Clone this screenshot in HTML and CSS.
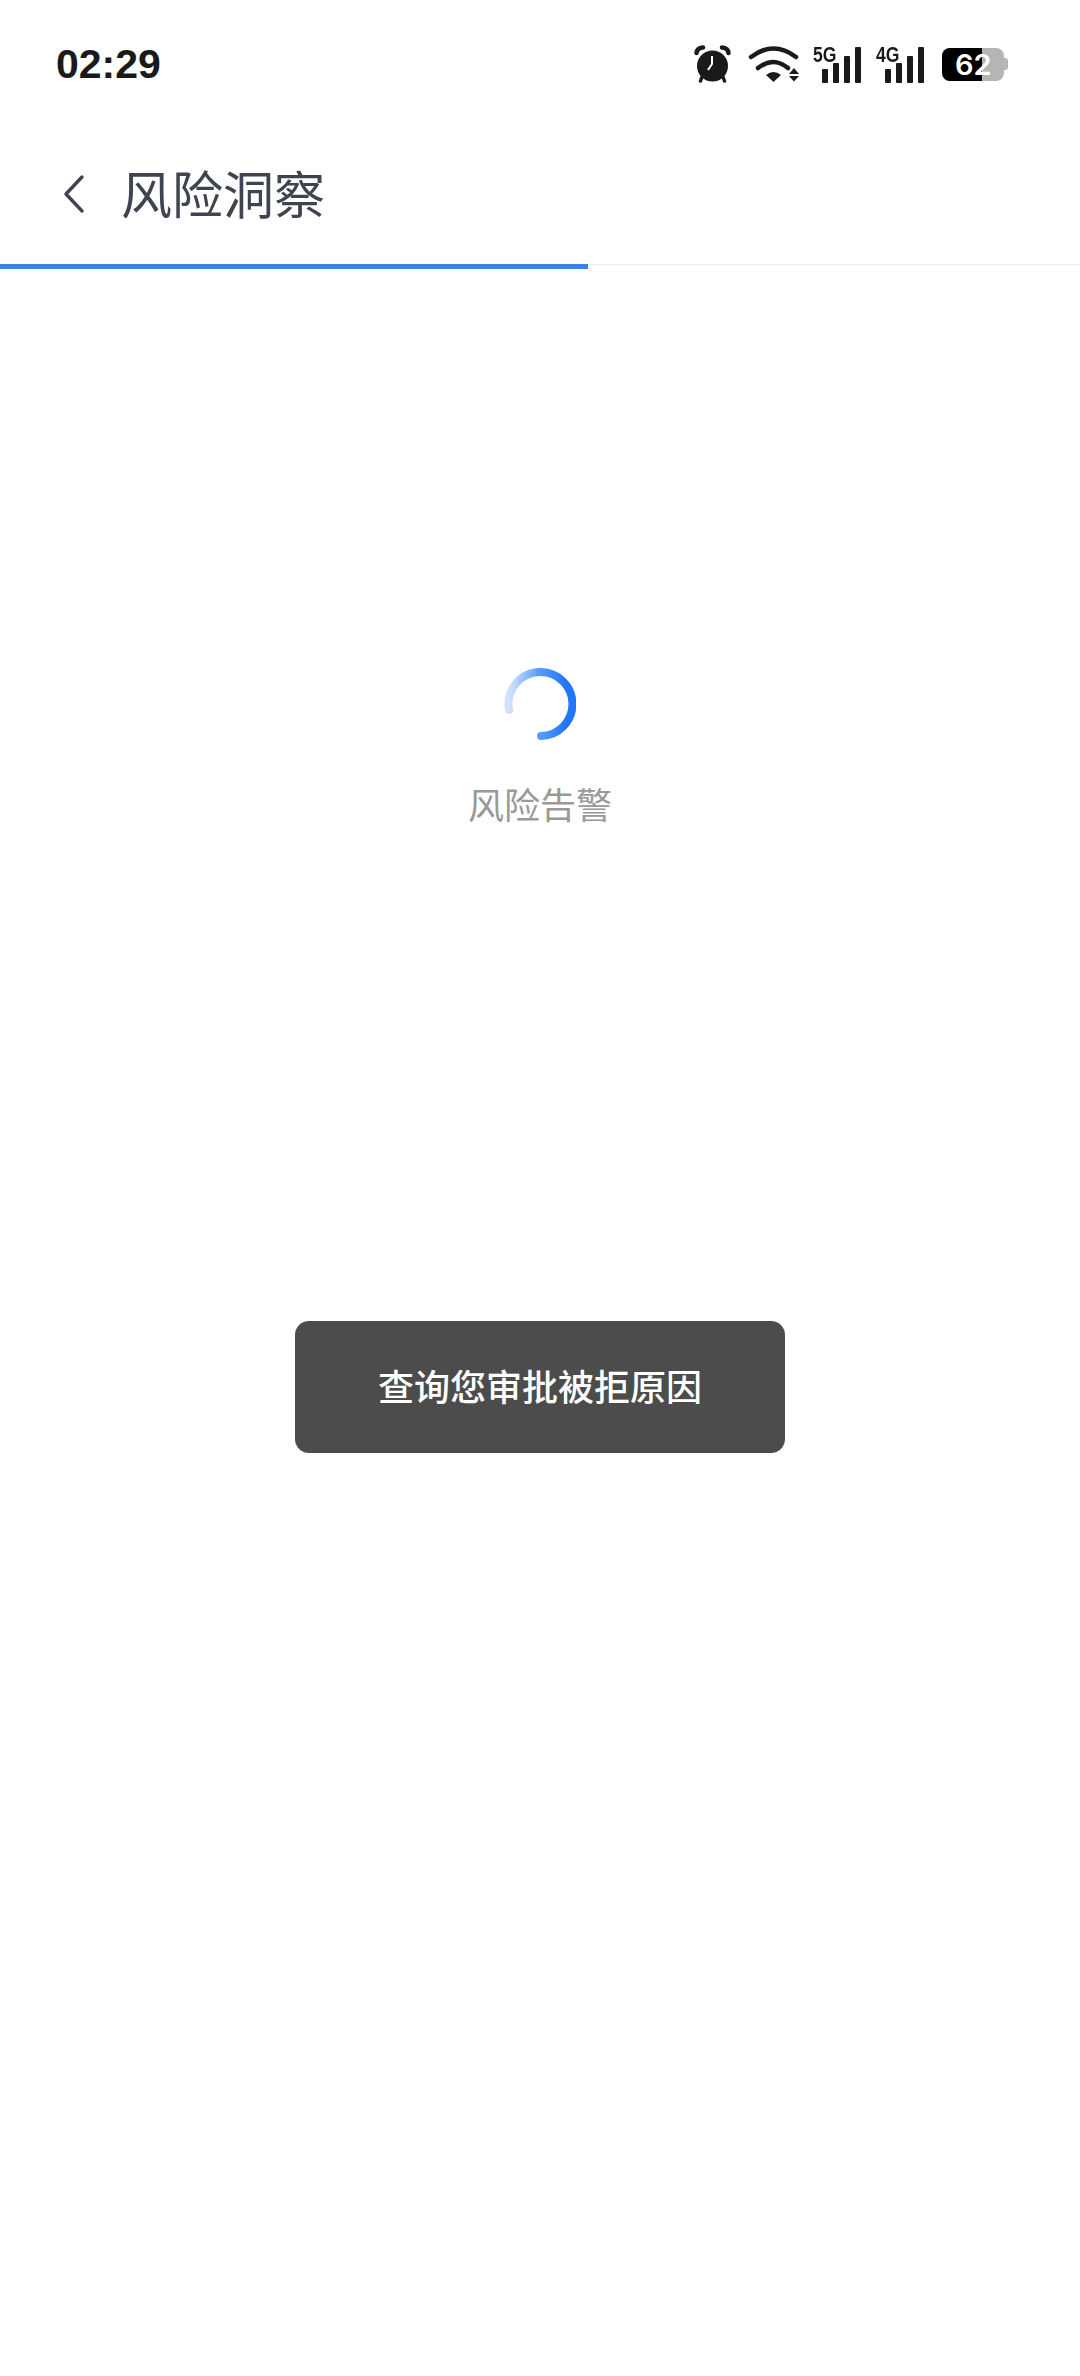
FILE: index.html
```html
<!DOCTYPE html>
<html lang="zh-CN">
<head>
  <meta charset="UTF-8">
  <meta name="viewport" content="width=device-width, initial-scale=1.0">
  <title>风险洞察</title>
  <link rel="stylesheet" href="styles.css">
</head>
<body>
  <div class="status-bar">
    <span class="status-time">02:29</span>
    <div class="status-icons">
      <svg class="icon-alarm" viewBox="0 0 38 38" xmlns="http://www.w3.org/2000/svg">
        <path d="M2.500 8 Q3 3 9 2.500 M34.500 8 Q34 3 28 2.500" fill="none" stroke="#1a1a1a" stroke-width="4.500" stroke-linecap="round"/>
        <circle cx="18.500" cy="21" r="15.500" fill="#1a1a1a"/>
        <path d="M8 32 L6.500 36 M29 32 L30.500 36" stroke="#1a1a1a" stroke-width="3.500" stroke-linecap="round"/>
        <path d="M18 11 V19 L14 25" fill="none" stroke="#fff" stroke-width="2"/>
      </svg>
      <svg class="icon-wifi" viewBox="0 0 52 38" xmlns="http://www.w3.org/2000/svg">
        <path d="M3 12 Q25.500 -5 48 12 M10 23 Q25 11 40 23" fill="none" stroke="#1a1a1a" stroke-width="4.500" stroke-linecap="round"/>
        <path d="M18 30 Q25.500 24 33 30 L25.500 37Z" fill="#1a1a1a"/>
        <path d="M41 29 L46 23 L51 29Z M41 31 H51 L46 36.500Z" fill="#1a1a1a"/>
      </svg>
      <div class="signal">
        <span class="signal-label">5G</span>
        <div class="signal-bars">
          <i class="bar bar-1"></i><i class="bar bar-2"></i><i class="bar bar-3"></i><i class="bar bar-4"></i>
        </div>
      </div>
      <div class="signal">
        <span class="signal-label">4G</span>
        <div class="signal-bars">
          <i class="bar bar-1"></i><i class="bar bar-2"></i><i class="bar bar-3"></i><i class="bar bar-4"></i>
        </div>
      </div>
      <div class="battery">
        <div class="battery-body">
          <div class="battery-fill"></div>
          <span class="battery-text">62</span>
        </div>
        <div class="battery-cap"></div>
      </div>
    </div>
  </div>

  <div class="nav-bar">
    <svg class="back-icon" viewBox="0 0 24 40" xmlns="http://www.w3.org/2000/svg">
      <path d="M20 3 L4 20 L20 37" fill="none" stroke="#3f4450" stroke-width="3.400" stroke-linecap="round" stroke-linejoin="round"/>
    </svg>
    <h1 class="nav-title">风险洞察</h1>
  </div>

  <div class="progress-track">
    <div class="progress-value"></div>
  </div>

  <div class="content">
    <div class="loading">
      <svg class="spinner" viewBox="0 0 72 72" xmlns="http://www.w3.org/2000/svg">
        <defs>
          <linearGradient id="spin-left" gradientUnits="userSpaceOnUse" x1="5" y1="0" x2="36" y2="0">
            <stop offset="0" stop-color="#d4e3fd"/>
            <stop offset="1" stop-color="#5b9bfb"/>
          </linearGradient>
          <linearGradient id="spin-right" gradientUnits="userSpaceOnUse" x1="36" y1="0" x2="62" y2="0">
            <stop offset="0" stop-color="#5b9bfb"/>
            <stop offset="1" stop-color="#2176fb"/>
          </linearGradient>
        </defs>
        <path d="M5 42 A32 32 0 0 1 36 4" fill="none" stroke="url(#spin-left)" stroke-width="8" stroke-linecap="round"/>
        <path d="M36 4 A32 32 0 0 1 37 68" fill="none" stroke="url(#spin-right)" stroke-width="8" stroke-linecap="round"/>
      </svg>
      <div class="loading-text">风险告警</div>
    </div>
    <div class="toast">查询您审批被拒原因</div>
  </div>
</body>
</html>
```
FILE: styles.css
```css
:root {
  --cjk-font: Inter, "Noto Sans CJK SC", "Noto Sans", sans-serif;
  --icon-color: #1a1a1a;
}

body {
  margin: 0;
  width: 1080px;
  height: 2376px;
  background-color: #fff;
  font-family: var(--cjk-font);
  overflow: hidden;
}

.status-bar {
  height: 128px;
  padding: 0 72px 0 56px;
  display: flex;
  align-items: center;
  justify-content: space-between;
  box-sizing: border-box;
}

.status-time {
  font-family: "Liberation Sans", sans-serif;
  font-size: 41px;
  font-weight: 700;
  color: var(--icon-color);
}

.status-icons {
  display: flex;
  align-items: center;
}

.icon-alarm {
  width: 38px;
  height: 38px;
  margin-right: 16px;
}

.icon-wifi {
  width: 52px;
  height: 38px;
  margin-right: 13px;
}

.signal {
  position: relative;
  width: 48px;
  height: 38px;
  margin-right: 15px;
}

.signal-label {
  position: absolute;
  left: 0;
  top: 2px;
  font-family: "Liberation Sans", sans-serif;
  font-size: 22px;
  line-height: 15px;
  font-weight: 700;
  color: var(--icon-color);
  transform: scaleX(0.8);
  transform-origin: left center;
}

.signal-bars {
  position: absolute;
  right: 0;
  bottom: 0;
  display: flex;
  align-items: flex-end;
  gap: 5px;
}

.bar {
  width: 6px;
  border-radius: 1px;
  background-color: var(--icon-color);
}

.bar-1 { height: 14px; }
.bar-2 { height: 20px; }
.bar-3 { height: 27px; }
.bar-4 { height: 36px; }

.battery {
  display: flex;
  align-items: center;
  margin-left: 3px;
}

.battery-body {
  position: relative;
  width: 62px;
  height: 33px;
  border-radius: 8px;
  overflow: hidden;
  background-color: #b5b5b5;
}

.battery-fill {
  width: 40px;
  height: 100%;
  background-color: #000;
}

.battery-text {
  position: absolute;
  left: 13px;
  top: 0;
  font-size: 29px;
  line-height: 33px;
  font-weight: 600;
  color: #fff;
}

.battery-cap {
  width: 4px;
  height: 12px;
  border-radius: 0 3px 3px 0;
  background-color: #b5b5b5;
}

.nav-bar {
  height: 136px;
  padding: 0 0 5px 62px;
  box-sizing: border-box;
  display: flex;
  align-items: center;
}

.back-icon {
  width: 24px;
  height: 40px;
  margin-right: 35px;
}

.nav-title {
  margin: 0 0 3px;
  font-size: 51px;
  font-weight: 400;
  color: #3f4450;
}

.progress-track {
  height: 1px;
  background-color: #eee;
}

.progress-value {
  width: 588px;
  height: 5px;
  background-color: #3c82e6;
}

.content {
  display: flex;
  flex-direction: column;
  align-items: center;
}

.loading {
  margin-top: 403px;
  display: flex;
  flex-direction: column;
  align-items: center;
}

.spinner {
  width: 72px;
  height: 72px;
  filter: blur(0.5px);
}

.loading-text {
  margin-top: 41px;
  font-size: 36px;
  line-height: 50px;
  color: #999;
}

.toast {
  width: 490px;
  height: 132px;
  margin-top: 490px;
  padding-bottom: 4px;
  box-sizing: border-box;
  border-radius: 14px;
  background-color: #4c4c4c;
  color: #fff;
  font-size: 36px;
  font-weight: 500;
  display: flex;
  align-items: center;
  justify-content: center;
}
```
